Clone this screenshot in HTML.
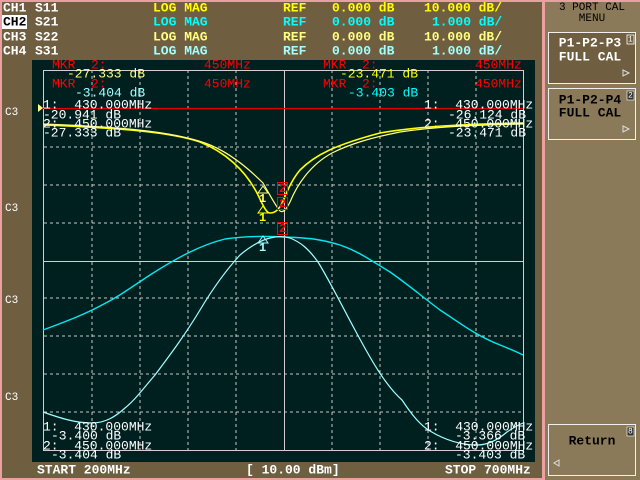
<!DOCTYPE html>
<html><head><style>
html,body{margin:0;padding:0;background:#6f5f40;width:640px;height:480px;overflow:hidden}
svg{display:block}
text{font-family:"Liberation Mono",monospace;font-size:13px;dominant-baseline:central;white-space:pre}
.b{font-weight:bold}
</style></head><body>
<svg width="640" height="480" viewBox="0 0 640 480" xmlns="http://www.w3.org/2000/svg" xml:space="preserve">
<rect x="0" y="0" width="640" height="480" fill="#e8a0a0"/>
<rect x="2" y="2" width="540" height="476" fill="#6f5f40"/>
<rect x="545" y="2" width="95" height="478" fill="#8a7a5a"/>
<rect x="32" y="60" width="503" height="402" fill="#002020"/>
<!-- header -->
<text x="3" y="8" fill="#fff" class="b">CH1</text>
<text x="35" y="8" fill="#fff" class="b">S11</text>
<rect x="2" y="15" width="25" height="14" fill="#fff"/>
<text x="3" y="22" fill="#000" class="b">CH2</text>
<text x="35" y="22" fill="#fff" class="b">S21</text>
<text x="3" y="37" fill="#fff" class="b">CH3</text>
<text x="35" y="37" fill="#fff" class="b">S22</text>
<text x="3" y="51" fill="#fff" class="b">CH4</text>
<text x="35" y="51" fill="#fff" class="b">S31</text>
<text x="153" y="8" fill="#ffff00" class="b">LOG MAG</text>
<text x="153" y="22" fill="#00ffff" class="b">LOG MAG</text>
<text x="153" y="37" fill="#ffff80" class="b">LOG MAG</text>
<text x="153" y="51" fill="#a0ffff" class="b">LOG MAG</text>
<text x="283" y="8" fill="#ffff00" class="b">REF</text>
<text x="283" y="22" fill="#00ffff" class="b">REF</text>
<text x="283" y="37" fill="#ffff80" class="b">REF</text>
<text x="283" y="51" fill="#a0ffff" class="b">REF</text>
<text x="332" y="8" fill="#ffff00" class="b">0.000 dB</text>
<text x="332" y="22" fill="#00ffff" class="b">0.000 dB</text>
<text x="332" y="37" fill="#ffff80" class="b">0.000 dB</text>
<text x="332" y="51" fill="#a0ffff" class="b">0.000 dB</text>
<text x="424" y="8" fill="#ffff00" class="b">10.000 dB/</text>
<text x="432" y="22" fill="#00ffff" class="b">1.000 dB/</text>
<text x="424" y="37" fill="#ffff80" class="b">10.000 dB/</text>
<text x="432" y="51" fill="#a0ffff" class="b">1.000 dB/</text>
<!-- grid -->
<g stroke="#c8c8c8" stroke-width="1" stroke-dasharray="3,3" fill="none">
<path d="M92 70V450M140 70V450M188 70V450M236 70V450M332 70V450M380 70V450M428 70V450M476 70V450"/>
<path d="M44 147H523M44 185H523M44 223H523M44 298H523M44 336H523M44 374H523M44 412H523"/>
</g>
<g stroke="#d0d0d0" stroke-width="1" fill="none">
<rect x="43.5" y="70.5" width="480" height="380"/>
<path d="M284.5 70V450M44 261.5H523"/>
</g>
<path d="M40 108.5H523" stroke="#e00000" stroke-width="1.2"/>
<path d="M38 104L43 108L38 112Z" fill="#ffff80"/>
<!-- curves -->
<g fill="none" stroke-width="1.2">
<path stroke="#ffff00" stroke-width="1.6" d="M43 125 C120 128 170 132 200 142 C225 152 245 170 257 193 C263 205 266 213 270 213 C275 213 278 210 281 205 C286 195 290 182 300 170 C315 155 335 145 380 133 C420 126 470 124 523 123"/>
<path stroke="#ffff80" d="M43 124 C120 127 170 131 205 143 C225 150 245 165 263 183 C270 195 275 205 280 211 C283 213 286 210 290 202 C297 185 310 165 332 153 C350 144 370 138 400 132 C440 126 480 125 523 124"/>
<path stroke="#00e8f0" stroke-width="1.4" d="M43 330 C70 320 85 314 100 306 C120 296 130 288 150 275 C175 259 200 245 225 239 C245 236 265 236 284 237 C310 238 320 239 340 245 C360 252 370 260 390 272 C410 286 420 295 440 310 C460 323 475 335 500 345 C510 349 517 352 523 355"/>
<path stroke="#a0ffff" d="M43 412 C60 418 75 423 92 423 C105 423 115 417 125 408 C135 400 142 390 155 375 C170 355 185 335 200 310 C215 285 228 268 240 255 C252 245 262 240 270 238 C278 236 284 236 290 238 C300 242 308 248 318 262 C328 278 340 302 355 330 C370 358 385 385 402 400 C412 415 420 425 430 431 C445 440 460 445 477 445 C490 445 500 438 507 432 C513 428 518 425 523 423"/>
</g>
<!-- markers -->
<path d="M258 193L263 186L268 193Z" fill="none" stroke="#ffff80"/>
<text x="259" y="199" fill="#ffff80" style="font-size:12px" class="b">1</text>
<path d="M258 213L263 206L268 213Z" fill="none" stroke="#ffff00"/>
<text x="259" y="218" fill="#ffff00" style="font-size:12px" class="b">1</text>
<path d="M258 243L263 236L268 243Z" fill="none" stroke="#a0ffff"/>
<text x="259" y="248" fill="#a0ffff" style="font-size:12px" class="b">1</text>
<rect x="277.5" y="182.5" width="10" height="12" fill="none" stroke="#ff0000"/>
<text x="279" y="189" fill="#ff0000" style="font-size:12px" class="b">2</text>
<rect x="277.5" y="197.5" width="10" height="12" fill="none" stroke="#ff0000"/>
<text x="279" y="204" fill="#ff0000" style="font-size:12px" class="b">2</text>
<rect x="277.5" y="222.5" width="10" height="12" fill="none" stroke="#ff0000"/>
<text x="279" y="229" fill="#ff0000" style="font-size:12px" class="b">2</text>
<!-- marker texts -->
<text x="52" y="65" fill="#ff0000">MKR  2:</text>
<text x="204" y="65" fill="#ff0000">450MHz</text>
<text x="67" y="74" fill="#ffff80">-27.333 dB</text>
<text x="52" y="84" fill="#ff0000">MKR  2:</text>
<text x="204" y="84" fill="#ff0000">450MHz</text>
<text x="75" y="93" fill="#a0ffff">-3.404 dB</text>
<text x="323" y="65" fill="#ff0000">MKR  2:</text>
<text x="475" y="65" fill="#ff0000">450MHz</text>
<text x="340" y="74" fill="#ffff00">-23.471 dB</text>
<text x="323" y="84" fill="#ff0000">MKR  2:</text>
<text x="475" y="84" fill="#ff0000">450MHz</text>
<text x="348" y="93" fill="#00ffff">-3.403 dB</text>
<g fill="#ffffff">
<text x="43" y="105">1:  430.000MHz</text>
<text x="43" y="115">-20.941 dB</text>
<text x="43" y="124">2:  450.000MHz</text>
<text x="43" y="133">-27.333 dB</text>
<text x="424" y="105">1:  430.000MHz</text>
<text x="448" y="115">-26.124 dB</text>
<text x="424" y="124">2:  450.000MHz</text>
<text x="448" y="133">-23.471 dB</text>
<text x="43" y="427">1:  430.000MHz</text>
<text x="51" y="436">-3.400 dB</text>
<text x="43" y="446">2:  450.000MHz</text>
<text x="51" y="455">-3.404 dB</text>
<text x="424" y="427">1:  430.000MHz</text>
<text x="455" y="436">-3.366 dB</text>
<text x="424" y="446">2:  450.000MHz</text>
<text x="455" y="455">-3.403 dB</text>
</g>
<text x="5" y="113" fill="#fff" style="font-size:11px">C3</text>
<text x="5" y="209" fill="#fff" style="font-size:11px">C3</text>
<text x="5" y="301" fill="#fff" style="font-size:11px">C3</text>
<text x="5" y="398" fill="#fff" style="font-size:11px">C3</text>
<!-- footer -->
<text x="37" y="470" fill="#fff" class="b">START 200MHz</text>
<text x="246" y="470" fill="#fff" class="b">[ 10.00 dBm]</text>
<text x="445" y="470" fill="#fff" class="b">STOP 700MHz</text>
<!-- softkeys -->
<text x="592" y="8" fill="#000" text-anchor="middle" style="font-size:11px">3 PORT CAL</text>
<text x="592" y="19" fill="#000" text-anchor="middle" style="font-size:11px">MENU</text>
<rect x="548.5" y="32.5" width="87" height="51" fill="#6f5f40" stroke="#f0f0f0"/>
<text x="590" y="43" fill="#fff" text-anchor="middle" class="b">P1-P2-P3</text>
<text x="590" y="57" fill="#fff" text-anchor="middle" class="b">FULL CAL</text>
<rect x="627" y="35" width="7" height="9" fill="none" stroke="#fff" stroke-width="0.8"/>
<text x="628" y="40" fill="#fff" style="font-size:8px">1</text>
<path d="M623 70L629 73L623 76Z" fill="none" stroke="#ddd"/>
<rect x="548.5" y="88.5" width="87" height="51" fill="#8a7a5a" stroke="#f0f0f0"/>
<text x="590" y="100" fill="#000" text-anchor="middle" class="b">P1-P2-P4</text>
<text x="590" y="113" fill="#000" text-anchor="middle" class="b">FULL CAL</text>
<rect x="627" y="91" width="7" height="9" fill="#333" stroke="#ddd" stroke-width="0.8"/>
<text x="628" y="96" fill="#fff" style="font-size:8px">2</text>
<path d="M623 126L629 129L623 132Z" fill="none" stroke="#ddd"/>
<rect x="548.5" y="424.5" width="87" height="51" fill="#8a7a5a" stroke="#f0f0f0"/>
<text x="592" y="441" fill="#000" text-anchor="middle" class="b">Return</text>
<rect x="627" y="427" width="7" height="9" fill="#333" stroke="#ddd" stroke-width="0.8"/>
<text x="628" y="432" fill="#fff" style="font-size:8px">8</text>
<path d="M559 460L554 463L559 466Z" fill="none" stroke="#ddd"/>
</svg>
</body></html>
